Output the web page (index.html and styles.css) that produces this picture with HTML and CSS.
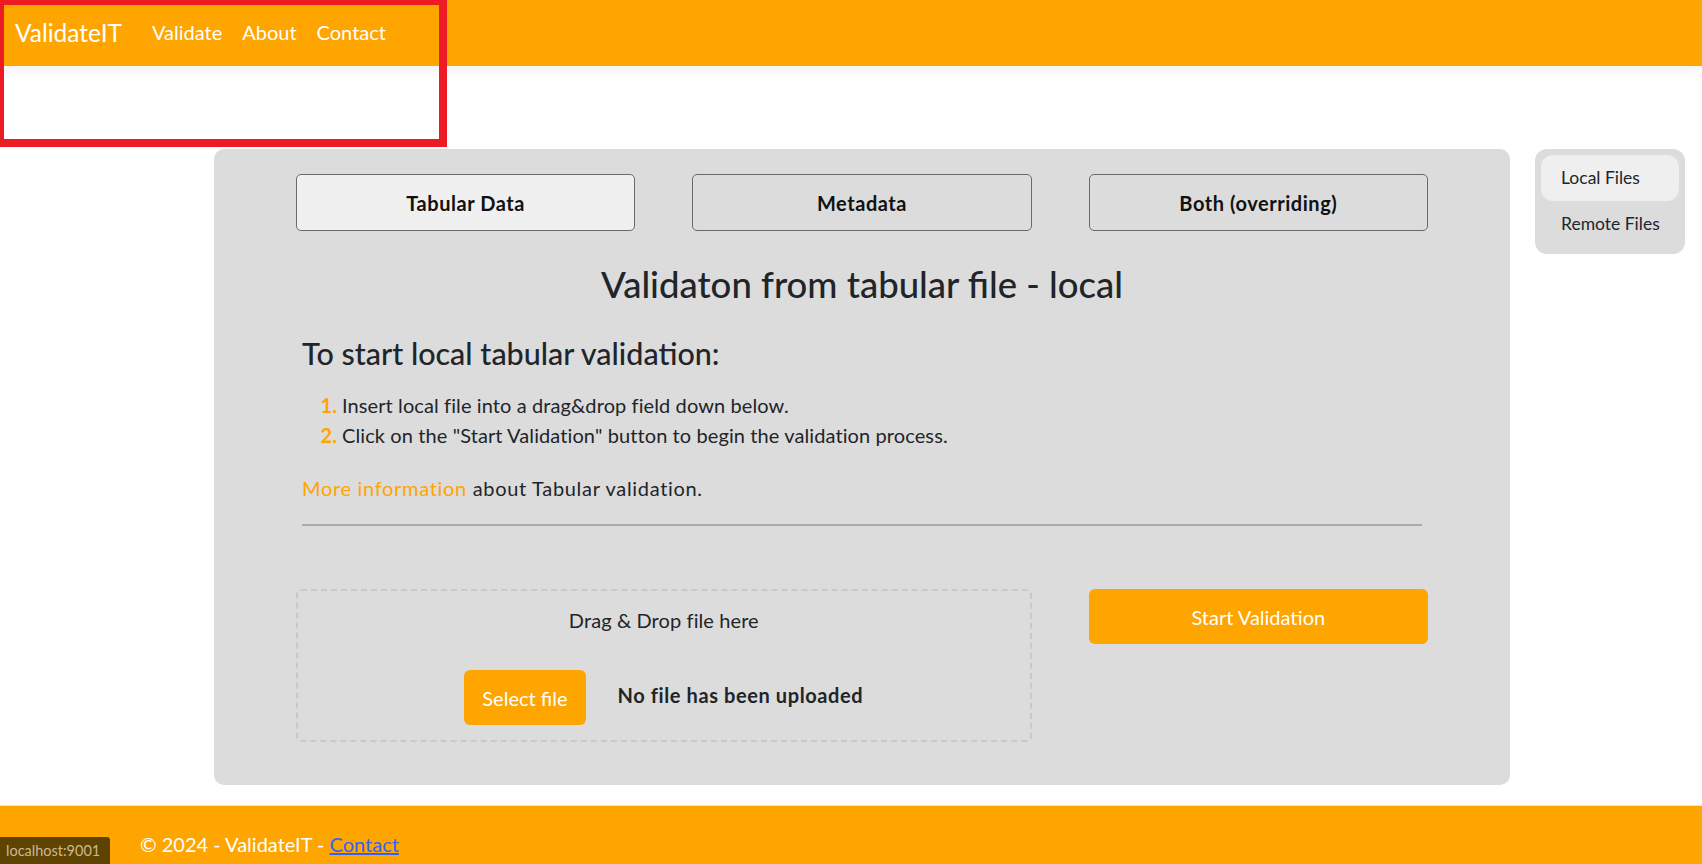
FILE: index.html
```html
<!DOCTYPE html>
<html lang="en">
<head>
<meta charset="utf-8">
<title>ValidateIT</title>
<link rel="stylesheet" href="styles.css">
</head>
<body>
<header class="navbar">
  <a class="brand" href="#">ValidateIT</a>
  <nav class="nav">
    <a class="nav-link" href="#">Validate</a>
    <a class="nav-link" href="#">About</a>
    <a class="nav-link" href="#">Contact</a>
  </nav>
</header>

<main class="page">
  <section class="card">
    <div class="grid tabs">
      <button class="tab active">Tabular Data</button>
      <button class="tab">Metadata</button>
      <button class="tab">Both (overriding)</button>
    </div>

    <h3 class="title">Validaton from tabular file - local</h3>

    <div class="info">
      <h4 class="subtitle">To start local tabular validation:</h4>
      <ol class="steps">
        <li>Insert local file into a drag&amp;drop field down below.</li>
        <li>Click on the "Start Validation" button to begin the validation process.</li>
      </ol>
      <p class="more"><a href="#" class="orange-link">More information</a> about Tabular validation.</p>
      <hr class="divider">
    </div>

    <div class="grid actions">
      <div class="dropzone">
        <p class="drop-text">Drag &amp; Drop file here</p>
        <div class="file-row">
          <button class="btn-orange select-btn">Select file</button>
          <span class="file-status">No file has been uploaded</span>
        </div>
      </div>
      <button class="btn-orange start-btn">Start Validation</button>
    </div>
  </section>

  <aside class="sidebar">
    <a class="side-item active" href="#">Local Files</a>
    <a class="side-item" href="#">Remote Files</a>
  </aside>
</main>

<footer class="footer">
  &copy; 2024 - ValidateIT - <a href="#" class="footer-link">Contact</a>
</footer>

<div class="status-bubble">localhost:9001</div>
<div class="annotation"></div>
</body>
</html>
```

FILE: styles.css
```css
* {
  box-sizing: border-box;
}

html, body {
  margin: 0;
  padding: 0;
}

body {
  font-family: Lato, "Open Sans", "Liberation Sans", sans-serif;
  font-size: 20px;
  line-height: 1.5;
  color: #212529;
  background: #ffffff;
  height: 864px;
  overflow: hidden;
}

a {
  text-decoration: none;
}

/* Navbar */
.navbar {
  position: relative;
  z-index: 2;
  height: 66px;
  background: #ffa500;
  display: flex;
  align-items: center;
  padding: 0 0 3px 15px;
  box-shadow: 0 4px 12px rgba(0, 0, 0, 0.06);
}

.brand {
  color: #ffffff;
  font-size: 24.5px;
  margin-right: 20px;
  padding-top: 3px;
}

.nav {
  display: flex;
}

.nav-link {
  color: #ffffff;
  padding: 0 10px;
}

/* Main area */
.page {
  display: flex;
  align-items: flex-start;
  gap: 25px;
  padding: 83px 0 0 214px;
}

.card {
  width: 1296px;
  height: 636px;
  background: #dcdcdc;
  border-radius: 10px;
  padding: 25px 82px 0;
}

.grid {
  display: grid;
  grid-template-columns: repeat(3, 1fr);
  column-gap: 57px;
}

.tab {
  height: 57px;
  font-family: inherit;
  font-size: 20px;
  font-weight: 700;
  letter-spacing: 0.55px;
  color: #111111;
  background: #dcdcdc;
  border: 1px solid #6a6a6a;
  border-radius: 5px;
}

.tab.active {
  background: #f0f0f0;
}

.title {
  margin: 32px 0 0;
  text-align: center;
  font-size: 36.5px;
  font-weight: 500;
  line-height: 1.2;
}

.info {
  padding: 0 6px;
}

.subtitle {
  margin: 28px 0 0;
  font-size: 30.5px;
  font-weight: 500;
  line-height: 1.2;
}

.steps {
  margin: 19px 0 0;
  padding-left: 40px;
  letter-spacing: 0.1px;
}

.steps li::marker {
  color: #ffa500;
  font-weight: 700;
}

.more {
  margin: 23px 0 0;
  letter-spacing: 0.68px;
}

.orange-link {
  color: #ffa500;
}

.divider {
  margin: 21px 0 0;
  border: 0;
  height: 2px;
  background: #ababab;
}

.actions {
  margin-top: 63px;
  align-items: start;
}

.dropzone {
  grid-column: span 2;
  height: 153px;
  border: 2px dashed #c9c9c9;
  border-radius: 5px;
  padding-top: 14px;
  display: flex;
  flex-direction: column;
  align-items: center;
}

.drop-text {
  margin: 0;
  letter-spacing: 0.1px;
}

.file-row {
  margin-top: 35px;
  display: flex;
  align-items: center;
  gap: 32px;
}

.btn-orange {
  font-family: inherit;
  font-size: 20px;
  color: #ffffff;
  background: #ffa500;
  border: 0;
  border-radius: 6px;
  height: 55px;
}

.select-btn {
  padding: 0 18px;
}

.file-status {
  font-weight: 700;
  letter-spacing: 0.6px;
  margin-bottom: 6px;
}

.start-btn {
  width: 100%;
}

/* Sidebar */
.sidebar {
  width: 150px;
  background: #dcdcdc;
  border-radius: 12px;
  padding: 6px;
  display: flex;
  flex-direction: column;
}

.side-item {
  display: block;
  font-size: 17.5px;
  line-height: 1.5;
  padding: 10px 20px;
  color: #212529;
  border-radius: 12px;
  white-space: nowrap;
}

.side-item.active {
  background: #efefef;
}

/* Footer */
.footer {
  margin-top: 20px;
  height: 59px;
  background: #ffa500;
  border-top: 1px solid #e6e6e6;
  color: #ffffff;
  padding: 23px 0 0 140px;
}

.footer-link {
  color: #2f63ff;
  text-decoration: underline;
}

/* Overlays */
.status-bubble {
  position: absolute;
  left: 0;
  bottom: 0;
  width: 110px;
  height: 27px;
  background: #5f4300;
  color: #cbb993;
  font-size: 14.5px;
  line-height: 27px;
  padding-left: 6px;
  border-top-right-radius: 3px;
  white-space: nowrap;
}

.annotation {
  position: absolute;
  left: -4px;
  top: -3px;
  width: 451px;
  height: 150px;
  border: 8px solid #ed1c24;
  z-index: 5;
  pointer-events: none;
}
```
